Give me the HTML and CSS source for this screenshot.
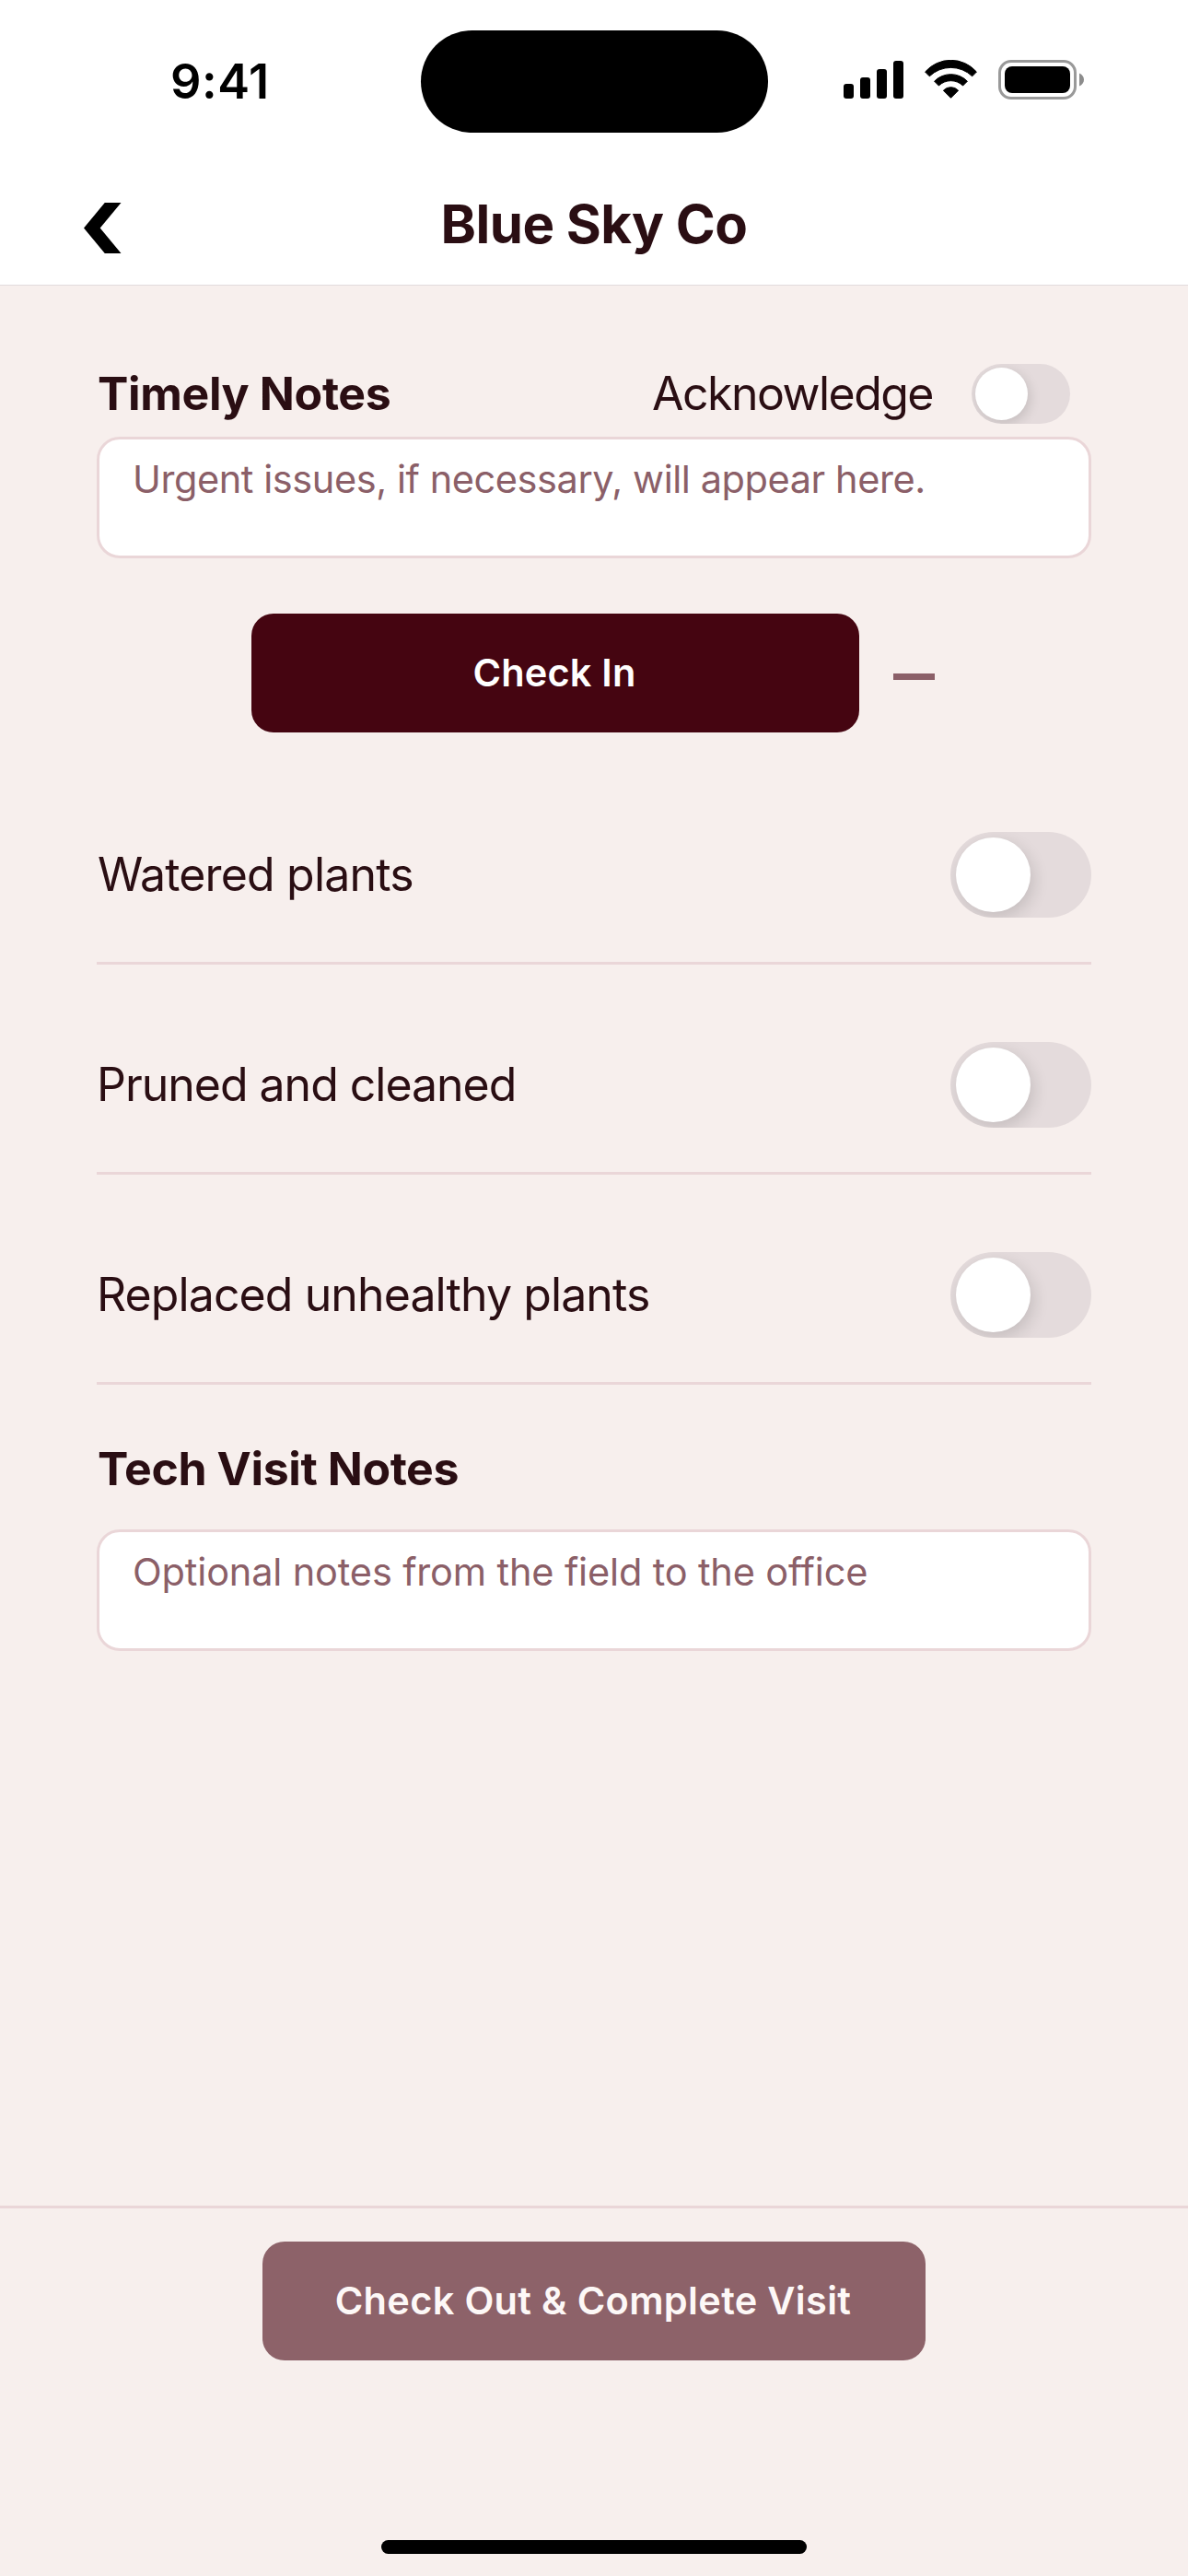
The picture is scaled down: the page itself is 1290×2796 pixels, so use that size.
FILE: index.html
```html
<!DOCTYPE html>
<html lang="en">
<head>
<meta charset="utf-8">
<title>Blue Sky Co</title>
<link rel="stylesheet" href="styles.css">
</head>
<body>
<div class="screen">
  <header class="header">
    <div class="status">
      <div class="time">9:41</div>
      <div class="island"></div>
      <div class="indicators">
        <svg width="65" height="42" viewBox="0 0 65 42"><rect x="0" y="26" width="11" height="16" rx="3"/><rect x="18" y="19" width="11" height="23" rx="3"/><rect x="36" y="10" width="11" height="32" rx="3"/><rect x="54" y="1" width="11" height="41" rx="3"/></svg>
        <svg width="57" height="42" viewBox="0 0 57 42" stroke="#000" stroke-linejoin="round" stroke-width="1"><path d="M.6 13A37 37 0 0 1 56.4 13L51.7 17.8A33.3 33.3 0 0 0 5.3 17.8Z"/><path d="M10.6 23.2A25 25 0 0 1 46.4 23.2L41.6 28A18.8 18.8 0 0 0 15.4 28Z"/><path d="M20.4 33.2A11 11 0 0 1 36.6 33.2L28.5 41.3Z"/></svg>
        <svg width="94" height="43" viewBox="0 0 94 43"><rect x="1.5" y="1.5" width="82" height="40" rx="12.5" fill="none" stroke="#999" stroke-width="3"/><rect x="7" y="7" width="71" height="29" rx="8"/><path d="M88 14.5C91.2 16 93 18.5 93 21.5S91.2 27 88 28.5Z" fill="#8c8c8c"/></svg>
      </div>
    </div>
    <div class="titlebar">
      <svg class="back" width="41" height="55" viewBox="0 0 41 55"><path d="M0 27.5L22.8 0H40.5L17.7 27.5L40.5 55H22.8Z"/></svg>
      <h1 class="title">Blue Sky Co</h1>
    </div>
  </header>
  <main class="content">
    <div class="notes-head">
      <h2 class="heading">Timely Notes</h2>
      <span class="ack">Acknowledge</span>
      <span class="switch small"><span class="knob"></span></span>
    </div>
    <div class="field urgent">Urgent issues, if necessary, will appear here.</div>
    <div class="checkin">
      <button class="button primary">Check In</button>
      <span class="dash"></span>
    </div>
    <ul class="tasks">
      <li class="task"><span class="label watered">Watered plants</span><span class="switch"><span class="knob"></span></span></li>
      <li class="task"><span class="label pruned">Pruned and cleaned</span><span class="switch"><span class="knob"></span></span></li>
      <li class="task"><span class="label replaced">Replaced unhealthy plants</span><span class="switch"><span class="knob"></span></span></li>
    </ul>
    <h2 class="heading tech">Tech Visit Notes</h2>
    <div class="field optional">Optional notes from the field to the office</div>
  </main>
  <footer class="footer">
    <button class="button complete">Check Out &amp; Complete Visit</button>
    <div class="home"></div>
  </footer>
</div>
</body>
</html>
```
FILE: styles.css
```css
* { box-sizing: border-box; margin: 0; padding: 0; }
body { font-family: Inter, "Liberation Sans", sans-serif; color: #2a0e13; background: #f7efed; }
svg { display: block; flex: none; }
.screen { width: 1290px; height: 2796px; display: flex; flex-direction: column; }

.header { height: 310px; background: #fff; border-bottom: 1px solid #e2dbdd; }
.status { height: 178px; padding: 33px 112px 0 185px; display: flex; align-items: flex-start; }
.time { width: 272px; height: 110px; line-height: 110px; font-size: 52.3px; font-weight: 600; letter-spacing: .57px; color: #000; }
.island { width: 377px; height: 111px; border-radius: 56px; background: #000; }
.indicators { margin: 32px 0 0 auto; display: flex; gap: 23px; }
.titlebar { height: 130px; padding: 0 91px; display: grid; grid-template-columns: 41px 1fr 41px; align-items: center; }
.back { margin-top: 9px; }
.title { padding-bottom: 1px; font-size: 58.2px; font-weight: 700; letter-spacing: -.54px; line-height: 70px; text-align: center; }

.content { flex: 1; padding: 84px 105px 0; }
.notes-head { height: 66px; margin-bottom: 14px; padding: 0 23px 0 1px; display: flex; align-items: center; }
.heading { font-size: 50px; font-weight: 700; line-height: 60px; letter-spacing: -.36px; white-space: nowrap; }
.ack { margin: 0 42px 0 auto; font-size: 50px; line-height: 60px; letter-spacing: -1.53px; white-space: nowrap; }
.field { height: 132px; padding: 13px 36px; border: 3px solid #ead6d8; border-radius: 25px; background: #fff; color: #8b5f68; font-size: 41.5px; line-height: 60px; white-space: nowrap; }
.urgent { letter-spacing: -.43px; }
.optional { letter-spacing: -.16px; font-variant-ligatures: none; }

.switch { flex: none; display: flex; width: 153px; height: 93px; padding: 6px; border-radius: 47px; background: #e4dbdc; overflow: hidden; }
.knob { width: 81px; height: 81px; border-radius: 50%; background: #fff; box-shadow: 3px 6px 18px rgba(0, 0, 0, .14); }
.switch.small { width: 107px; height: 65px; padding: 4px; }
.small .knob { width: 57px; height: 57px; box-shadow: 2px 4px 13px rgba(0, 0, 0, .14); }

.checkin { margin: 60px 0 0 168px; display: flex; align-items: center; gap: 37px; }
.button { height: 129px; padding: 0 2px 2px 0; border: 0; border-radius: 24px; color: #fff; font: 570 41.5px/60px Inter, "Liberation Sans", sans-serif; white-space: nowrap; }
.primary { width: 660px; background: #450511; letter-spacing: .18px; }
.dash { width: 45px; height: 7px; margin-top: 8px; background: #8b5f68; }

.tasks { margin-top: 24px; list-style: none; }
.task { height: 228px; padding: 84px 0 48px; border-bottom: 3px solid #ead6d8; display: flex; align-items: center; justify-content: space-between; }
.label { padding-bottom: 2px; font-size: 50px; line-height: 60px; white-space: nowrap; }
.watered { padding-left: 1px; letter-spacing: -.82px; }
.pruned { letter-spacing: -1.02px; }
.replaced { letter-spacing: -.9px; }
.tech { margin: 61px 0 36px 1px; letter-spacing: -.41px; }

.footer { height: 402px; padding: 36px 0 24px; border-top: 3px solid #ead6d8; display: flex; flex-direction: column; align-items: center; }
.complete { width: 720px; background: #8d6269; color: #fdf8f7; letter-spacing: .32px; }
.home { width: 462px; height: 15px; margin-top: auto; border-radius: 8px; background: #000; }
```
